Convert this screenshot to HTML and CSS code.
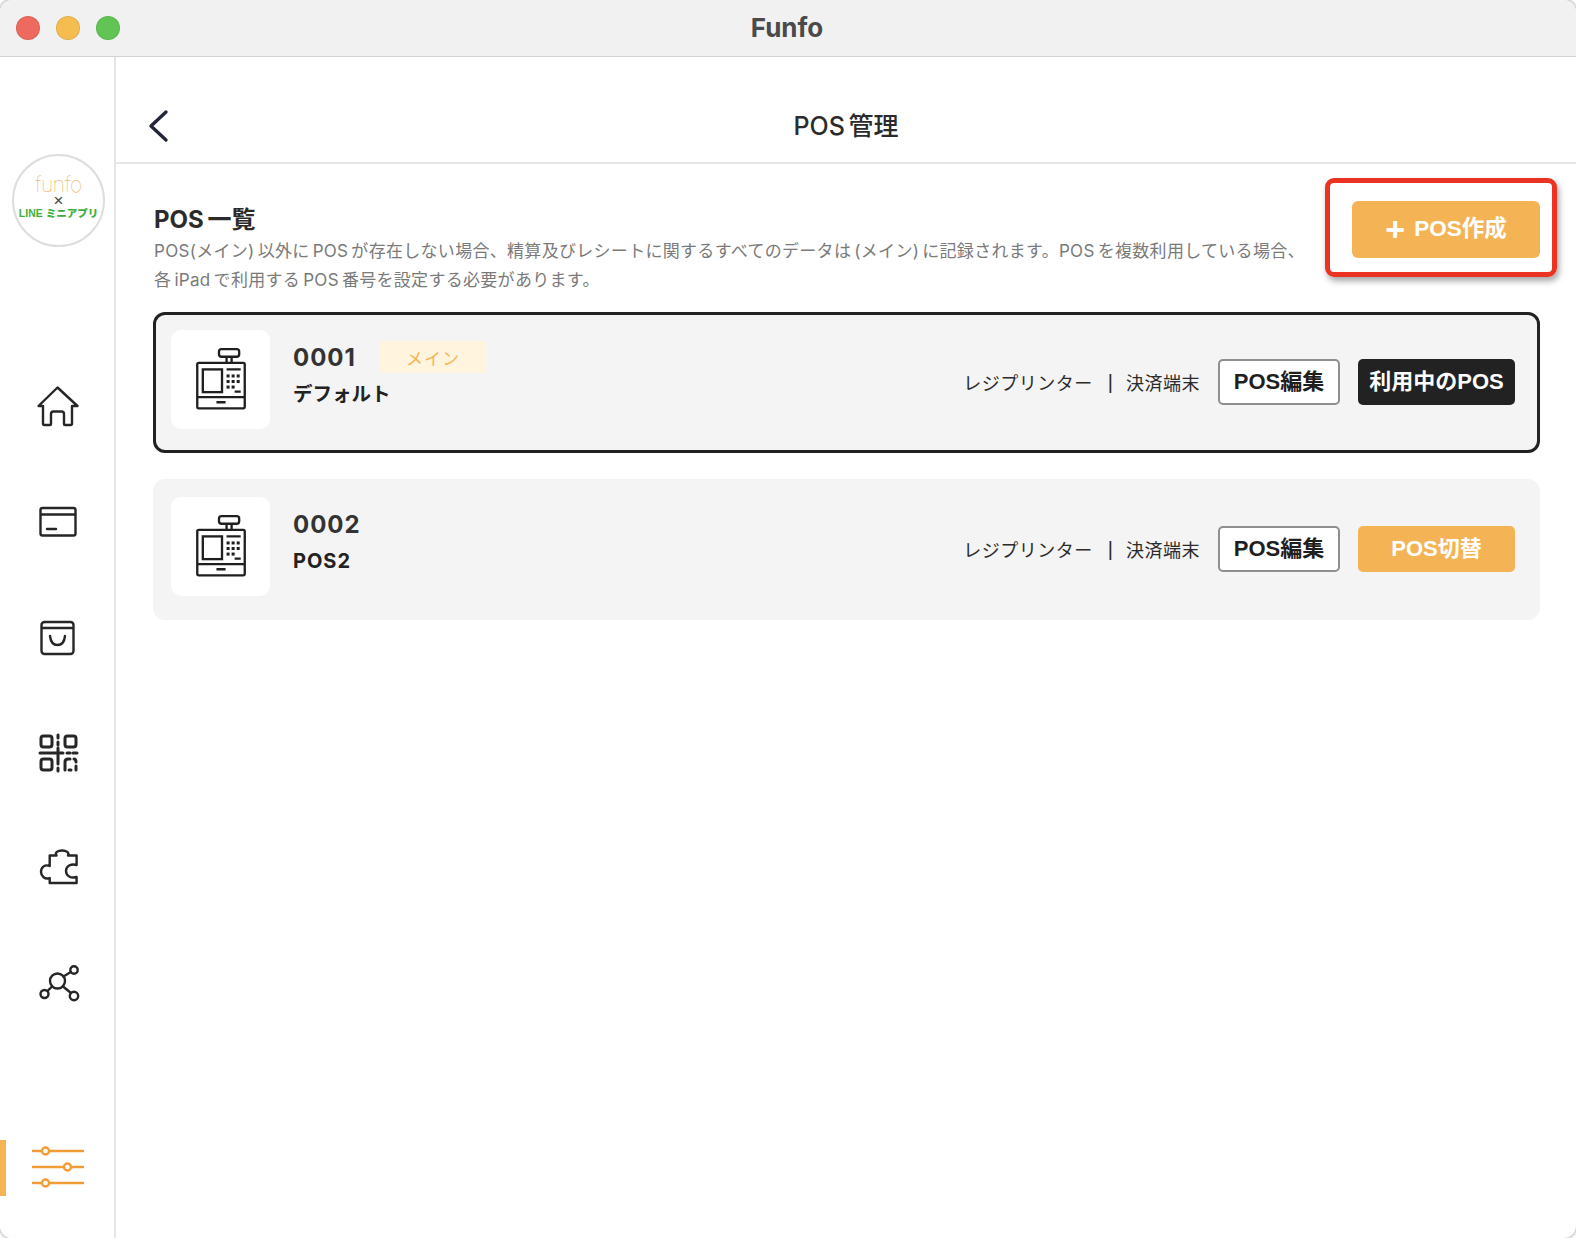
FILE: index.html
```html
<!DOCTYPE html>
<html lang="ja">
<head>
<meta charset="utf-8">
<title>Funfo</title>
<link rel="stylesheet" href="styles.css">
</head>
<body>
<div class="window">
  <header class="titlebar">
    <div class="lights">
      <span class="light red"></span>
      <span class="light yellow"></span>
      <span class="light green"></span>
    </div>
    <div class="app-title">Funfo</div>
  </header>
  <div class="body-row">
    <aside class="sidebar">
      <div class="logo">
        <span class="logo-funfo">funfo</span>
        <span class="logo-x">×</span>
        <span class="logo-line">LINE ミニアプリ</span>
      </div>
      <nav class="nav">
        <div class="nav-item">
          <svg class="nav-icon" viewBox="0 0 48 48"><path d="M24.500 4.500 5.500 23H10v17.500q0 1.500 1.500 1.500H17q1 0 1-1V31q0-2.500 2.500-2.500h8Q31 28.500 31 31v10q0 1 1 1h5.500q1.500 0 1.500-1.500V23h5.500z"/></svg>
        </div>
        <div class="nav-item">
          <svg class="nav-icon" viewBox="0 0 48 48"><rect x="7.500" y="10" width="35" height="27.500" rx="2"/><path d="M8 16.500h34M14 31h9"/></svg>
        </div>
        <div class="nav-item">
          <svg class="nav-icon" viewBox="0 0 48 48"><rect x="8.500" y="9" width="32" height="32" rx="3"/><path d="M9 15h31M17 23q1 9 7.500 9T32 23"/></svg>
        </div>
        <div class="nav-item">
          <svg class="nav-icon qr" viewBox="0 0 48 48"><rect x="8" y="8" width="11" height="11" rx="2.500"/><rect x="32" y="8" width="11" height="11" rx="2.500"/><rect x="8" y="31" width="11" height="11" rx="2.500"/><path d="M7 25h23M25 7v3M25 14v3M25 20v16M25 40v3M34 25h3M40 25h4M32 42v-8q0-3 3-3h2M41 31q2 0 2 3M43 38v4M36 42h2"/></svg>
        </div>
        <div class="nav-item">
          <svg class="nav-icon" viewBox="0 0 48 48"><path d="M16.700 40H43.600V34C38 35.500 33 33 33 28C33 23 38 20.500 43.600 22V12.500H35C36.500 9.500 33.500 7.500 29 7.500C24.500 7.500 21.500 9.500 23.500 12.500H16.700V23C12 21 8 24 8 29C8 33 12 37 16.700 35z"/></svg>
        </div>
        <div class="nav-item">
          <svg class="nav-icon" viewBox="0 0 48 48"><circle cx="24.500" cy="23" r="7.500"/><circle cx="41" cy="12" r="3.700"/><circle cx="11.500" cy="36" r="4"/><circle cx="41" cy="38" r="4.200"/><path d="M30.500 18.500 37.800 14M19 28.500l-4.500 4.500M30 28.500l8 6.500"/></svg>
        </div>
      </nav>
      <div class="nav-active">
        <span class="active-bar"></span>
        <svg class="sliders" viewBox="0 0 56 48"><path d="M4 7h8M21 7h33M4 23h30M43 23h11M4 39h8M21 39h33"/><circle cx="16.500" cy="7" r="3.500"/><circle cx="38.500" cy="23" r="3.500"/><circle cx="16.500" cy="39" r="3.500"/></svg>
      </div>
    </aside>
    <main class="main">
      <div class="page-head">
        <svg class="back" viewBox="0 0 24 36"><path d="M19 4 4 18l15 14"/></svg>
        <h1 class="page-title">POS 管理</h1>
      </div>
      <section class="content">
        <div class="intro">
          <div class="intro-text">
            <h2 class="intro-title">POS 一覧</h2>
            <p class="intro-desc">POS(メイン) 以外に POS が存在しない場合、精算及びレシートに関するすべてのデータは (メイン) に記録されます。POS を複数利用している場合、<br>各 iPad で利用する POS 番号を設定する必要があります。</p>
          </div>
          <button class="create-btn"><span class="plus">+</span>POS作成</button>
          <span class="highlight"></span>
        </div>
        <div class="pos-card current">
          <div class="pos-icon">
            <svg viewBox="0 0 98 98"><use href="#register"/></svg>
          </div>
          <div class="pos-info">
            <div class="pos-num-row"><span class="pos-num">0001</span><span class="badge">メイン</span></div>
            <div class="pos-name">デフォルト</div>
          </div>
          <div class="pos-devices">レジプリンター<span class="sep">|</span>決済端末</div>
          <button class="btn btn-edit">POS編集</button>
          <button class="btn btn-dark">利用中のPOS</button>
        </div>
        <div class="pos-card">
          <div class="pos-icon">
            <svg viewBox="0 0 98 98"><use href="#register"/></svg>
          </div>
          <div class="pos-info">
            <div class="pos-num-row"><span class="pos-num">0002</span></div>
            <div class="pos-name latin">POS2</div>
          </div>
          <div class="pos-devices">レジプリンター<span class="sep">|</span>決済端末</div>
          <button class="btn btn-edit">POS編集</button>
          <button class="btn btn-orange">POS切替</button>
        </div>
      </section>
    </main>
  </div>
</div>
<svg class="defs" width="0" height="0">
  <defs>
    <g id="register">
      <g class="reg-line">
        <rect x="26" y="32.500" width="47" height="45" rx="1.500"/>
        <path d="M26 66.500h47"/>
        <rect x="47.500" y="19" width="20" height="7.500" rx="2.500"/>
        <path d="M55 26.500v6M60 26.500v6"/>
        <rect x="31.500" y="39" width="19" height="22.500"/>
        <path d="M55 39h14M63 61h6M45 71.500h9"/>
      </g>
      <g class="reg-dots">
        <rect x="55" y="44" width="3" height="3"/><rect x="60" y="44" width="3" height="3"/><rect x="65" y="44" width="3" height="3"/>
        <rect x="55" y="49.500" width="3" height="3"/><rect x="60" y="49.500" width="3" height="3"/><rect x="65" y="49.500" width="3" height="3"/>
        <rect x="55" y="55" width="3" height="3"/><rect x="60" y="55" width="3" height="3"/>
      </g>
    </g>
  </defs>
</svg>
</body>
</html>
```

FILE: styles.css
```css
* { box-sizing: border-box; }
html, body { margin: 0; height: 100%; background: #fff; }
body { font-family: "Liberation Sans", "Noto Sans CJK JP", sans-serif; color: #2b2b2b; overflow: hidden; }
.defs { position: absolute; }

.window {
  width: 1576px; height: 1238px; display: flex; flex-direction: column;
  border-radius: 12px; overflow: hidden; background: #fff; box-shadow: 0 0 3px 1px rgba(0,0,0,.3);
}
.titlebar {
  height: 57px; flex: none; background: #f1f1f1; border-bottom: 1px solid #d4d4d4;
  display: flex; align-items: center; position: relative; padding-left: 16px;
}
.lights { display: flex; gap: 16px; }
.light { width: 24px; height: 24px; border-radius: 50%; border: 1px solid rgba(0,0,0,.08); }
.red { background: #ee6a5f; }
.yellow { background: #f5bd4f; }
.green { background: #61c454; }
.app-title {
  position: absolute; left: 0; right: 2px; text-align: center; top: 11px;
  font-family: "Inter", sans-serif; font-size: 26px; line-height: 34px; font-weight: 700; color: #4a4a4a;
}

.body-row { flex: 1; display: flex; min-height: 0; }
.sidebar {
  width: 116px; flex: none; border-right: 2px solid #e6e6e6; display: flex; flex-direction: column;
  align-items: center; position: relative; background: #fff;
}
.logo {
  width: 93px; height: 93px; border-radius: 50%; border: 2px solid #dedede; margin-top: 97px; margin-left: 3px;
  display: flex; flex-direction: column; align-items: center; justify-content: flex-start; padding-top: 19px; flex: none;
}
.logo-funfo { font-family: "Inter", sans-serif; font-weight: 100; font-size: 21px; line-height: 20px; color: #f2a24a; letter-spacing: -.4px; }
.logo-x { font-family: "Liberation Sans", sans-serif; font-size: 17px; line-height: 12px; color: #444; }
.logo-line { font-size: 10.500px; line-height: 13px; font-weight: 900; color: #3fae3f; white-space: nowrap; }

.nav { display: flex; flex-direction: column; margin-top: 102px; }
.nav-item { height: 115px; width: 114px; display: flex; align-items: center; justify-content: center; }
.nav-icon { width: 48px; height: 48px; fill: none; stroke: #262626; stroke-width: 2.400; stroke-linejoin: round; stroke-linecap: round; }
.nav-icon.qr { stroke-width: 3; }

.nav-active { margin-top: auto; height: 56px; margin-bottom: 42px; width: 114px; display: flex; align-items: center; justify-content: center; position: relative; }
.active-bar { position: absolute; left: 0; top: 0; bottom: 0; width: 6px; background: #f4b455; }
.sliders { width: 56px; height: 48px; fill: none; stroke: #f39c35; stroke-width: 2.400; stroke-linecap: round; }

.main { flex: 1; min-width: 0; display: flex; flex-direction: column; }
.page-head {
  height: 107px; flex: none; border-bottom: 2px solid #e6e6e6; display: flex; align-items: center; justify-content: center; position: relative;
}
.back { position: absolute; left: 31px; top: 51px; width: 24px; height: 36px; fill: none; stroke: #23263a; stroke-width: 3.400; stroke-linecap: round; stroke-linejoin: round; }
.page-title { margin: 0; font-family: "Inter", "Noto Sans CJK JP", sans-serif; font-size: 25px; font-weight: 500; line-height: 34px; color: #2b2b2b; padding-top: 32px; word-spacing: -3px; }

.content { padding: 37px 36px 0 37px; display: flex; flex-direction: column; }
.intro { display: flex; justify-content: space-between; align-items: flex-start; position: relative; height: 111px; }
.intro-text { padding-left: 1px; }
.intro-title { margin: 0; padding-top: 1px; font-family: "Inter", "Noto Sans CJK JP", sans-serif; font-size: 24px; line-height: 36px; font-weight: 700; color: #2b2b2b; word-spacing: -2px; }
.intro-desc { margin: -1px 0 0; font-family: "Inter", "Noto Sans CJK JP", sans-serif; font-size: 17px; line-height: 29px; color: #7a7a7a; white-space: nowrap; letter-spacing: .3px; word-spacing: -2px; }
.create-btn {
  width: 188px; height: 57px; border: 0; border-radius: 6px; background: #f4b455; color: #fff;
  font: 700 22.500px/1 "Liberation Sans", "Noto Sans CJK JP", sans-serif; display: flex; align-items: center; justify-content: center; gap: 9px; flex: none; padding-bottom: 2px;
}
.plus { font-size: 34px; font-weight: 700; line-height: 32px; }
.highlight {
  position: absolute; right: -17px; top: -23px; width: 232px; height: 99px; border: 5px solid #ea3323; border-radius: 9px;
  box-shadow: 2px 4px 6px rgba(0,0,0,.35);
}

.pos-card {
  height: 141px; background: #f4f4f4; border-radius: 12px; display: flex; align-items: flex-start; margin-bottom: 26px;
  border: 3px solid #f4f4f4; padding: 15px 22px 0 15px;
}
.pos-card.current { border-color: #222; }
.pos-icon { width: 99px; height: 99px; background: #fff; border-radius: 10px; flex: none; }
.pos-icon svg { width: 99px; height: 99px; display: block; }
.reg-line { fill: none; stroke: #1f1f1f; stroke-width: 2.300; }
.reg-dots { fill: #1f1f1f; }
.pos-info { margin-left: 23px; flex: 1; padding-top: 10px; }
.pos-num-row { display: flex; align-items: center; height: 34px; }
.pos-num { font-family: "Inter", sans-serif; font-size: 24px; font-weight: 700; letter-spacing: 1px; color: #333; }
.badge { margin-left: 24px; width: 106px; height: 32px; background: #fff4dd; color: #f4b455; font-size: 17px; display: flex; align-items: center; justify-content: center; letter-spacing: 1px; }
.pos-name { font-family: "Inter", "Noto Sans CJK JP", sans-serif; font-size: 19.500px; font-weight: 700; line-height: 30px; margin-top: 5px; color: #222; }
.pos-name.latin { font-size: 20px; letter-spacing: 1px; }
.pos-devices { font-size: 18px; color: #2b2b2b; display: flex; align-items: center; margin-right: 18px; align-self: center; margin-top: -17px; letter-spacing: .5px; }
.sep { margin: 0 13px 0 15px; font-size: 20px; line-height: 20px; letter-spacing: 0; }
.btn {
  height: 46px; border-radius: 5px; font: 700 22px/1 "Liberation Sans", "Noto Sans CJK JP", sans-serif; flex: none; border: 0; padding: 0; margin-top: 29px;
}
.btn-edit { width: 122px; background: #fff; color: #1f1f1f; border: 2px solid #8f8f8f; margin-right: 18px; }
.btn-dark { width: 157px; background: #222; color: #fff; }
.btn-orange { width: 157px; background: #f4b455; color: #fff; }
```
